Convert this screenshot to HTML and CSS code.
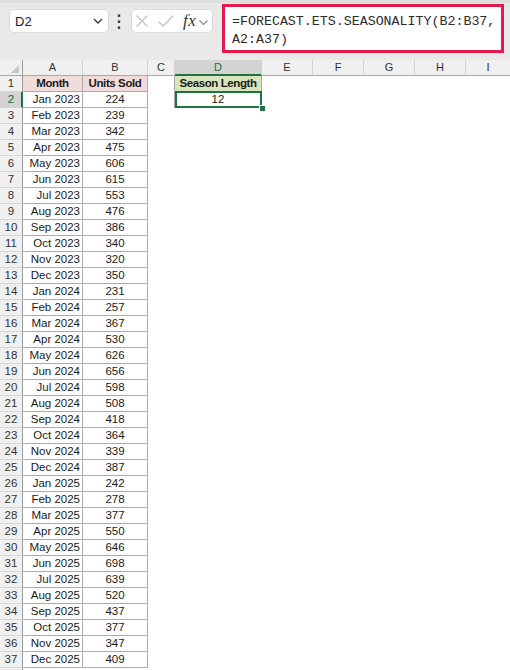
FILE: index.html
```html
<!DOCTYPE html>
<html>
<head>
<meta charset="utf-8">
<link rel="stylesheet" href="styles.css">
</head>
<body>
<div class="toolbar">
  <div class="namebox"><span>D2</span>
    <svg class="chev" width="10" height="6" viewBox="0 0 10 6"><path d="M1 1 L5 5 L9 1" fill="none" stroke="#333" stroke-width="1.3"/></svg>
  </div>
  <svg class="dots" width="4" height="16" viewBox="0 0 4 16"><rect x="0.8" y="0.5" width="2.4" height="2.4" fill="#333"/><rect x="0.8" y="6.5" width="2.4" height="2.4" fill="#333"/><rect x="0.8" y="12.5" width="2.4" height="2.4" fill="#333"/></svg>
  <div class="fxbox">
    <svg class="ic-x" width="12" height="12" viewBox="0 0 12 12"><path d="M0.5 0.5 L11.5 11.5 M11.5 0.5 L0.5 11.5" stroke="#c2c2c2" stroke-width="1.3" fill="none"/></svg>
    <svg class="ic-ok" width="16" height="12" viewBox="0 0 16 12"><path d="M0.5 6.5 L5 11 L15.5 0.5" stroke="#c2c2c2" stroke-width="1.3" fill="none"/></svg>
    <span class="fx">fx</span>
    <svg class="ic-chev" width="9" height="5" viewBox="0 0 9 5"><path d="M0.5 0.5 L4.5 4.5 L8.5 0.5" stroke="#8a8a8a" stroke-width="1.1" fill="none"/></svg>
  </div>
  <div class="formula">=FORECAST.ETS.SEASONALITY(B2:B37,<br>A2:A37)</div>
</div>
<div class="sheet">
  <div class="hrow">
    <div class="corner"><span class="tri"></span></div>
    <div class="h wa">A</div><div class="h wb">B</div><div class="h wc">C</div><div class="h wd act">D</div><div class="h we">E</div><div class="h we">F</div><div class="h we">G</div><div class="h we">H</div><div class="h wi">I</div>
  </div>
  <div class="row"><span class="rh">1</span><span class="ca hd">Month</span><span class="cb hd">Units Sold</span><span class="cc"></span><span class="cd green">Season Length</span></div>
  <div class="row"><span class="rh act">2</span><span class="ca">Jan 2023</span><span class="cb">224</span><span class="cc"></span><span class="cd sel">12<span class="handle"></span></span></div>
  <div class="row"><span class="rh">3</span><span class="ca">Feb 2023</span><span class="cb">239</span></div>
  <div class="row"><span class="rh">4</span><span class="ca">Mar 2023</span><span class="cb">342</span></div>
  <div class="row"><span class="rh">5</span><span class="ca">Apr 2023</span><span class="cb">475</span></div>
  <div class="row"><span class="rh">6</span><span class="ca">May 2023</span><span class="cb">606</span></div>
  <div class="row"><span class="rh">7</span><span class="ca">Jun 2023</span><span class="cb">615</span></div>
  <div class="row"><span class="rh">8</span><span class="ca">Jul 2023</span><span class="cb">553</span></div>
  <div class="row"><span class="rh">9</span><span class="ca">Aug 2023</span><span class="cb">476</span></div>
  <div class="row"><span class="rh">10</span><span class="ca">Sep 2023</span><span class="cb">386</span></div>
  <div class="row"><span class="rh">11</span><span class="ca">Oct 2023</span><span class="cb">340</span></div>
  <div class="row"><span class="rh">12</span><span class="ca">Nov 2023</span><span class="cb">320</span></div>
  <div class="row"><span class="rh">13</span><span class="ca">Dec 2023</span><span class="cb">350</span></div>
  <div class="row"><span class="rh">14</span><span class="ca">Jan 2024</span><span class="cb">231</span></div>
  <div class="row"><span class="rh">15</span><span class="ca">Feb 2024</span><span class="cb">257</span></div>
  <div class="row"><span class="rh">16</span><span class="ca">Mar 2024</span><span class="cb">367</span></div>
  <div class="row"><span class="rh">17</span><span class="ca">Apr 2024</span><span class="cb">530</span></div>
  <div class="row"><span class="rh">18</span><span class="ca">May 2024</span><span class="cb">626</span></div>
  <div class="row"><span class="rh">19</span><span class="ca">Jun 2024</span><span class="cb">656</span></div>
  <div class="row"><span class="rh">20</span><span class="ca">Jul 2024</span><span class="cb">598</span></div>
  <div class="row"><span class="rh">21</span><span class="ca">Aug 2024</span><span class="cb">508</span></div>
  <div class="row"><span class="rh">22</span><span class="ca">Sep 2024</span><span class="cb">418</span></div>
  <div class="row"><span class="rh">23</span><span class="ca">Oct 2024</span><span class="cb">364</span></div>
  <div class="row"><span class="rh">24</span><span class="ca">Nov 2024</span><span class="cb">339</span></div>
  <div class="row"><span class="rh">25</span><span class="ca">Dec 2024</span><span class="cb">387</span></div>
  <div class="row"><span class="rh">26</span><span class="ca">Jan 2025</span><span class="cb">242</span></div>
  <div class="row"><span class="rh">27</span><span class="ca">Feb 2025</span><span class="cb">278</span></div>
  <div class="row"><span class="rh">28</span><span class="ca">Mar 2025</span><span class="cb">377</span></div>
  <div class="row"><span class="rh">29</span><span class="ca">Apr 2025</span><span class="cb">550</span></div>
  <div class="row"><span class="rh">30</span><span class="ca">May 2025</span><span class="cb">646</span></div>
  <div class="row"><span class="rh">31</span><span class="ca">Jun 2025</span><span class="cb">698</span></div>
  <div class="row"><span class="rh">32</span><span class="ca">Jul 2025</span><span class="cb">639</span></div>
  <div class="row"><span class="rh">33</span><span class="ca">Aug 2025</span><span class="cb">520</span></div>
  <div class="row"><span class="rh">34</span><span class="ca">Sep 2025</span><span class="cb">437</span></div>
  <div class="row"><span class="rh">35</span><span class="ca">Oct 2025</span><span class="cb">377</span></div>
  <div class="row"><span class="rh">36</span><span class="ca">Nov 2025</span><span class="cb">347</span></div>
  <div class="row"><span class="rh">37</span><span class="ca">Dec 2025</span><span class="cb">409</span></div>
  <div class="row"><span class="rh"></span></div>
</div>
</body>
</html>
```
FILE: styles.css
```css
html, body {
  margin: 0;
  padding: 0;
}
body {
  width: 510px;
  height: 670px;
  overflow: hidden;
  background: #ffffff;
  font-family: "Liberation Sans", Arial, sans-serif;
  color: #1a1a1a;
}

/* ---------- formula toolbar ---------- */
.toolbar {
  height: 60px;
  box-sizing: border-box;
  background: #e9e9e9;
  border-top: 3px solid #dedede;
  display: flex;
  align-items: flex-start;
}
.namebox {
  margin: 6px 0 0 9px;
  width: 100px;
  height: 24px;
  box-sizing: border-box;
  background: #ffffff;
  border: 1px solid #dadada;
  border-radius: 5px;
  display: flex;
  align-items: center;
  justify-content: space-between;
  padding: 0 5px 0 5px;
  font-size: 13px;
  color: #222;
}
.dots {
  margin: 11px 0 0 8px;
  display: block;
}
.fxbox {
  margin: 6px 0 0 10px;
  width: 82px;
  height: 24px;
  box-sizing: border-box;
  background: #ffffff;
  border: 1px solid #dadada;
  border-radius: 5px;
  display: flex;
  align-items: center;
}
.ic-x { margin-left: 4px; display: block; }
.ic-ok { margin-left: 10px; display: block; }
.fx {
  margin-left: 9px;
  font-family: "Liberation Serif", "Times New Roman", serif;
  font-style: italic;
  font-size: 17px;
  line-height: 20px;
  color: #333;
  letter-spacing: 0.5px;
}
.ic-chev { margin-left: 3px; margin-top: 2px; display: block; }
.formula {
  margin: 1px 0 0 9px;
  width: 282px;
  height: 49px;
  box-sizing: border-box;
  border: 3px solid #e21b4b;
  background: #ffffff;
  padding: 6px 4px 0 7px;
  font-family: "Liberation Mono", "Courier New", monospace;
  font-size: 13.3px;
  line-height: 18px;
  color: #2b2b2b;
  white-space: nowrap;
}

/* ---------- sheet grid ---------- */
.sheet {
  font-size: 11.5px;
}
.hrow {
  display: flex;
  height: 16px;
  background: #f0f0f0;
}
.corner {
  width: 23px;
  height: 16px;
  box-sizing: border-box;
  border-right: 1px solid #9a9a9a;
  border-bottom: 1px solid #a8a8a8;
  display: flex;
  justify-content: flex-end;
  align-items: flex-end;
  padding: 0 3px 2px 0;
}
.tri {
  width: 0;
  height: 0;
  border-left: 8px solid transparent;
  border-bottom: 8px solid #c6c6c6;
}
.h {
  height: 16px;
  box-sizing: border-box;
  border-right: 1px solid #d2d2d2;
  border-bottom: 1px solid #a8a8a8;
  text-align: center;
  line-height: 15px;
  color: #333;
  font-size: 11px;
}
.h.act {
  background: #d3d3d3;
  border-bottom: 2px solid #217346;
  color: #1d6b3c;
  line-height: 14px;
}
.wa { width: 60px; }
.wb { width: 65px; }
.wc { width: 27px; }
.wd { width: 87px; }
.we { width: 51px; }
.wi { flex: 1; border-right: none; }

.row {
  display: flex;
  height: 16px;
}
.rh {
  width: 23px;
  height: 16px;
  box-sizing: border-box;
  background: #f0f0f0;
  border-right: 1px solid #9a9a9a;
  border-bottom: 1px solid #d6d6d6;
  text-align: center;
  line-height: 15px;
  color: #333;
}
.rh.act {
  background: #d3d3d3;
  border-right: 2px solid #217346;
  color: #1d6b3c;
  padding-left: 1px;
}
.ca, .cb, .cd {
  height: 16px;
  box-sizing: border-box;
  border-right: 1px solid #acacac;
  border-bottom: 1px solid #acacac;
  line-height: 15px;
  white-space: nowrap;
  overflow: visible;
}
.ca {
  width: 60px;
  text-align: right;
  padding-right: 2px;
}
.cb {
  width: 65px;
  text-align: center;
}
.cc {
  width: 26px;
}
.cd {
  width: 88px;
  border-left: 1px solid #acacac;
  text-align: center;
}
.ca.hd, .cb.hd {
  background: #f2dcdb;
  font-weight: bold;
  letter-spacing: -0.4px;
  text-align: center;
  padding-right: 0;
}
.green {
  background: #d8e4bc;
  font-weight: bold;
  letter-spacing: -0.4px;
}
.sel {
  position: relative;
}
.sel::after {
  content: "";
  position: absolute;
  left: 0;
  top: -1px;
  right: -1px;
  bottom: -1px;
  border: 2px solid #217346;
}
.handle {
  position: absolute;
  right: -4px;
  bottom: -4px;
  width: 5px;
  height: 5px;
  background: #217346;
  outline: 1px solid #ffffff;
  z-index: 2;
}
```
